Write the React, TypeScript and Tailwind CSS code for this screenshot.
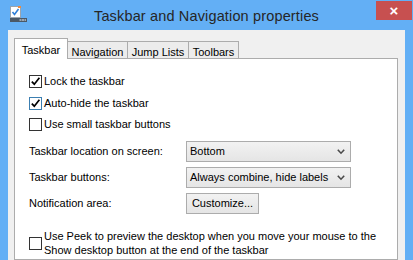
import { ReactNode } from 'react';

const font = { fontFamily: '"Liberation Sans", Arial, sans-serif' };

function AppIcon() {
  return (
    <svg width="20" height="20" viewBox="0 0 20 20">
      <rect x="2.5" y="1.5" width="10" height="11" fill="#ffffff" stroke="#9aa4ae" />
      <rect x="10" y="1" width="3" height="2" fill="#f08a3c" />
      <path d="M4.5 7 L6.5 9.5 L10.5 4" fill="none" stroke="#2f7fd8" strokeWidth="1.6" />
      <rect x="2" y="13" width="17" height="4" fill="#4b5866" />
      <rect x="11.5" y="14" width="2" height="2" fill="#9aa6b2" />
      <rect x="14" y="14" width="2" height="2" fill="#9aa6b2" />
      <rect x="16.5" y="14" width="1.5" height="2" fill="#9aa6b2" />
    </svg>
  );
}

function Check({ checked, focus }: { checked?: boolean; focus?: boolean }) {
  return (
    <div className={`w-[13px] h-[13px] shrink-0 bg-white border ${focus ? 'border-[#3c7fb1]' : 'border-[#333333]'} flex items-center justify-center`}>
      {checked && (
        <svg width="11" height="11" viewBox="0 0 11 11">
          <path d="M1.8 5.6 L4.3 8.2 L9.4 1.8" fill="none" stroke="#000000" strokeWidth="1.7" />
        </svg>
      )}
    </div>
  );
}

function Chevron() {
  return (
    <svg width="8" height="6" viewBox="0 0 8 6">
      <path d="M0.8 0.8 L4 4.2 L7.2 0.8" fill="none" stroke="#4a4a4a" strokeWidth="1.6" />
    </svg>
  );
}

function Row({ label, children }: { label: string; children: ReactNode }) {
  return (
    <div className="flex items-center h-[21px]">
      <div className="w-[157px]">{label}</div>
      {children}
    </div>
  );
}

function Select({ value }: { value: string }) {
  return (
    <div className="w-[165px] h-[21px] border border-[#acacac] bg-linear-to-b from-[#f2f2f2] to-[#e5e5e5] flex items-center justify-between pl-[3px] pr-[5px]">
      <span>{value}</span>
      <Chevron />
    </div>
  );
}

export default function App() {
  const tabs = [
    { name: 'Taskbar', w: 'w-[54px]', active: true },
    { name: 'Navigation', w: 'w-[61px]' },
    { name: 'Jump Lists', w: 'w-[62px]' },
    { name: 'Toolbars', w: 'w-[51px]' },
  ];

  return (
    <div className="w-[413px] h-[260px] bg-[#63aff5] overflow-hidden flex flex-col text-[11px] text-black" style={font}>
      {/* title bar */}
      <div className="h-[30px] shrink-0 grid grid-cols-[1fr_auto_1fr]">
        <div className="pl-[8px] pt-[5px]">
          <AppIcon />
        </div>
        <div className="text-[14.5px] text-[#262626] pt-[6px] tracking-[0.15px]">Taskbar and Navigation properties</div>
        <div className="flex justify-end items-start pt-[1px] pr-[1px]">
          <div className="w-[36px] h-[19px] bg-[#c75050] flex items-center justify-center text-white text-[15px] font-bold leading-none">
            ×
          </div>
        </div>
      </div>

      {/* client area */}
      <div className="flex-1 mx-[8px] bg-[#f0f0f0] pl-[6px] pr-[7px] pt-[8px] flex flex-col">
        <div className="flex items-end">
          {tabs.map((t) => (
            <div
              key={t.name}
              className={`${t.w} text-center border-t border-l border-r border-[#acacac] ${
                t.active ? 'h-[21px] bg-white relative z-10 pt-[3px]' : 'h-[18px] bg-[#ececec] pt-[2px] -ml-px'
              }`}
            >
              {t.name}
            </div>
          ))}
        </div>

        <div className="flex-1 -mt-px bg-white border border-[#acacac] pl-[14px] pt-[16px]">
          <div className="flex items-center gap-[2px] h-[13px]">
            <Check checked />
            <span>Lock the taskbar</span>
          </div>
          <div className="flex items-center gap-[2px] h-[13px] mt-[9px]">
            <Check checked focus />
            <span>Auto-hide the taskbar</span>
          </div>
          <div className="flex items-center gap-[2px] h-[13px] mt-[8px]">
            <Check />
            <span>Use small taskbar buttons</span>
          </div>

          <div className="mt-[10px] flex flex-col gap-[5px]">
            <Row label="Taskbar location on screen:">
              <Select value="Bottom" />
            </Row>
            <Row label="Taskbar buttons:">
              <Select value="Always combine, hide labels" />
            </Row>
            <Row label="Notification area:">
              <div className="w-[73px] h-[21px] border border-[#acacac] bg-linear-to-b from-[#f2f2f2] to-[#e5e5e5] flex items-center justify-center">
                Customize...
              </div>
            </Row>
          </div>

          <div className="mt-[15px] flex items-center gap-[2px]">
            <Check />
            <div className="leading-[14px]">
              Use Peek to preview the desktop when you move your mouse to the
              <br />
              Show desktop button at the end of the taskbar
            </div>
          </div>
        </div>
      </div>
    </div>
  );
}
